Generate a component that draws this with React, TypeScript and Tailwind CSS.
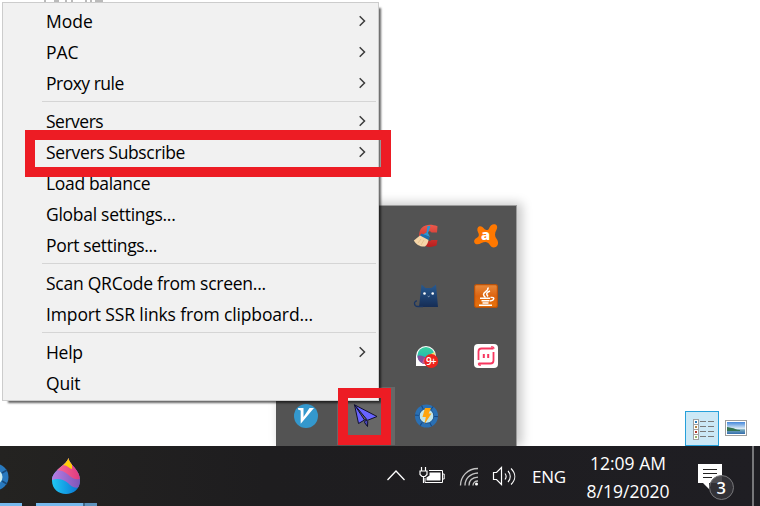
import type { ReactNode } from 'react';

type Entry = { label: string; sub?: boolean; track: string };

const groups: Entry[][] = [
  [
    { label: 'Mode', sub: true, track: 'tracking-[0px]' },
    { label: 'PAC', sub: true, track: 'tracking-[0px]' },
    { label: 'Proxy rule', sub: true, track: 'tracking-[-0.5px]' },
  ],
  [
    { label: 'Servers', sub: true, track: 'tracking-[-0.5px]' },
    { label: 'Servers Subscribe', sub: true, track: 'tracking-[-0.35px]' },
    { label: 'Load balance', track: 'tracking-[-0.33px]' },
    { label: 'Global settings...', track: 'tracking-[-0.28px]' },
    { label: 'Port settings...', track: 'tracking-[-0.33px]' },
  ],
  [
    { label: 'Scan QRCode from screen...', track: 'tracking-[-0.25px]' },
    { label: 'Import SSR links from clipboard...', track: 'tracking-[-0.13px]' },
  ],
  [
    { label: 'Help', sub: true, track: 'tracking-[-0.3px]' },
    { label: 'Quit', track: 'tracking-[-0.2px]' },
  ],
];

function MenuRow({ label, sub, track }: Entry) {
  return (
    <div className="flex h-[31px] items-center justify-between pl-[43px] pr-[12px]">
      <span className={`whitespace-nowrap text-[17.5px] leading-[31px] text-black ${track}`}>{label}</span>
      {sub && (
        <svg className="-mt-px" width="8" height="12" viewBox="0 0 8 12" fill="none" stroke="#3c3c3c" strokeWidth="1.500">
          <path d="M1.700 1.200 6.500 6 1.700 10.800" />
        </svg>
      )}
    </div>
  );
}

function ContextMenu() {
  return (
    <div className="absolute left-[2px] top-[2px] h-[399px] w-[377px] border border-[#cccccc] bg-[#f1f1f1] pt-[3px] shadow-[4px_4px_2px_-2px_rgba(0,0,0,0.6)]">
      {groups.map((group, i) => (
        <div key={i}>
          {i > 0 && <div className="mb-[4px] ml-[39px] mr-[2px] mt-[2px] h-px bg-[#d5d5d5]" />}
          {group.map((entry) => (
            <MenuRow key={entry.label} {...entry} />
          ))}
        </div>
      ))}
    </div>
  );
}

function Cleaner() {
  return (
    <svg width="26" height="26" viewBox="0 0 26 26">
      <defs>
        <linearGradient id="cred" x2="0" y2="1"><stop stopColor="#ec5a4c" /><stop offset="1" stopColor="#b91d1d" /></linearGradient>
      </defs>
      <path d="M24.500 3.200 24 9.500H18.500C17 7.200 12.500 8 12 13 12 18 16 19.500 18.500 17h6l-1 5.500C14 26.500 6 21.500 6 13 6 2.500 15-.5 24.500 3.200Z" fill="url(#cred)" />
      <path d="M14.500 3h3l-2.500 7 2 4-7-2.500 3.500-2Z" fill="#2a96d4" />
      <path d="m8.500 10.500 8 3.500-.7 3-9.300-4Z" fill="#1b6fae" />
      <path d="m7 12.500 8.500 4.500c-.5 3-1.500 5-3.500 6.500C7 24 3 21.500.8 17.500Z" fill="#f6d6a8" />
      <path d="m8 16-3 4m6-3-3 5" stroke="#dfb883" strokeWidth=".7" />
    </svg>
  );
}

function Avast() {
  return (
    <svg width="26" height="26" viewBox="0 0 26 26">
      <path d="M16 5.500C17.500 2 19.500.8 21.800 1.300c2.600.7 3 3.400 1.700 5.500-2 3.500-2 6.500.2 9.300 2 3 1.800 6-.5 7.600-2.600 1.600-5.200.4-6.500-2-2-3.500-5-3.300-8.300-1.600-3 1.800-5.800 1.600-6.900-.3-1.100-2.400.6-4.200 2.800-5.300 2-1.200 2-3 .6-5.500C3.800 6.500 4.300 3.800 6.500 3.200c2-.4 3.500 1 4.500 2.300 1.500 1.800 4 2.200 5 0Z" fill="#ff7800" />
      <text x="8" y="16.500" fontSize="14.500" fontWeight="800" fill="#fff">a</text>
    </svg>
  );
}

function Cat() {
  return (
    <svg width="26" height="26" viewBox="0 0 26 26">
      <defs><linearGradient id="cat" x2="0" y2="1"><stop stopColor="#285a91" /><stop offset="1" stopColor="#162d55" /></linearGradient></defs>
      <path d="M6 24 8.500 1.500l4 3.500h6L23 1.500 25 24Z" fill="url(#cat)" />
      <path d="M10 23.500H5C.5 23.500.5 18 4 17.800" fill="none" stroke="#1a3562" strokeWidth="1.300" />
      <circle cx="11.500" cy="10.500" r="1.300" fill="#fff" /><circle cx="19.700" cy="10.500" r="1.300" fill="#fff" />
      <path d="m14.700 13 1 .7 1-.7" stroke="#9fb1c8" fill="none" strokeWidth=".8" />
    </svg>
  );
}

function Java() {
  return (
    <svg width="26" height="26" viewBox="0 0 26 26">
      <defs><linearGradient id="java" x2="0" y2="1"><stop stopColor="#e88a3c" /><stop offset=".5" stopColor="#dd6410" /><stop offset="1" stopColor="#e8730a" /></linearGradient></defs>
      <rect x="1.600" y="1.600" width="22.800" height="22.800" rx="2" fill="url(#java)" stroke="#b8520b" strokeWidth="1.200" />
      <path d="M15 4.500c.8 4-4.500 4-4.500 7 0 1 .8 2 2 3m4.500-6.500c-4 1.500-4 3-2 5.500" fill="none" stroke="#fff" strokeWidth="1.500" />
      <path d="M7 15.300h10M8.500 17.800h8m-7 2.200h6M6 22.300h13M17.500 14.500c5-1 4 3-.5 3.500" fill="none" stroke="#fff" strokeWidth="1.400" />
    </svg>
  );
}

function Chat() {
  return (
    <svg width="26" height="26" viewBox="0 0 26 26">
      <defs>
        <linearGradient id="lens" x2="0" y2="1"><stop stopColor="#3ccf9f" /><stop offset="1" stopColor="#12b0b8" /></linearGradient>
      </defs>
      <path d="M3 23V13a10 10 0 1 1 10 10Z" fill="#fff" />
      <circle cx="13" cy="12.500" r="8.600" fill="url(#lens)" />
      <path d="m14 13 7.500-4c.8 3 0 5-1 6Z" fill="#f2de6a" />
      <path d="M4.500 13c3-1 6 0 9 2l-2 6c-4-.5-7-4-7-8Z" fill="#84509c" />
      <path d="m11 15 3 1-1 5-4-1Z" fill="#cf5a8c" />
      <circle cx="18.200" cy="18" r="7" fill="#ed241c" />
      <text x="13" y="21.700" fontSize="10" fontWeight="600" fill="#fff" textLength="10.500">9+</text>
    </svg>
  );
}

function Screen() {
  return (
    <svg width="26" height="26" viewBox="0 0 26 26">
      <rect x="1" y="1" width="24" height="24" rx="4" fill="#fff" />
      <path d="M5.500 17V8.500C5.500 6.200 6.500 5.500 8.500 5.500H20.500M20.500 9v8.500c0 2.200-1 3-3 3H5.500" fill="none" stroke="#f7365f" strokeWidth="1.800" />
      <path d="M18 3.800h1.500c1 0 1.500.5 1.500 2M8 22.200H7c-1 0-1.500-.5-1.500-2" fill="none" stroke="#f7365f" strokeWidth="1.300" />
      <path d="M10.800 11v4m4.400-4v4" stroke="#f7365f" strokeWidth="2" />
    </svg>
  );
}

function V2ray() {
  return (
    <svg width="26" height="26" viewBox="0 0 26 26">
      <circle cx="13" cy="13" r="12" fill="#3498cd" />
      <path d="M5 5h5.500v9L16.500 5H21L7.700 20.800V7.500L5 6.500Z" fill="#fff" />
    </svg>
  );
}

function Plane() {
  return (
    <svg width="26" height="26" viewBox="0 0 26 26">
      <path d="M12.500 16.500 14.800 18.500 14.500 23.500 11.500 19.500Z" fill="#4a47b8" stroke="#10102c" strokeWidth="1" />
      <path d="M1.500 1.800 24 13.500 14.500 17.300Z" fill="#6863ff" stroke="#10102c" strokeWidth="1" strokeLinejoin="round" />
      <path d="M1.500 1.800 11.500 17 5.500 20.500Z" fill="#6863ff" stroke="#10102c" strokeWidth="1" strokeLinejoin="round" />
    </svg>
  );
}

function Bolt() {
  return (
    <svg width="26" height="26" viewBox="0 0 26 26">
      <circle cx="13.500" cy="13" r="9.300" fill="#c2e5e8" stroke="#2a70b4" strokeWidth="4.500" />
      <circle cx="13.500" cy="13" r="9.500" fill="none" stroke="#174a85" strokeWidth="4" strokeDasharray="1 8.948" />
      <circle cx="13.500" cy="13" r="7.300" fill="none" stroke="#1c528d" strokeWidth=".8" />
      <path d="M12 5h6l-2.300 5.500H18.500L11.500 21l1.300-7H9.500Z" fill="#ffa40d" />
    </svg>
  );
}

function TrayCell({ children, active }: { children?: ReactNode; active?: boolean }) {
  return (
    <div className="flex items-center justify-center">
      {active ? <div className="flex h-[58px] w-[58px] items-center justify-center bg-[#676767]">{children}</div> : children}
    </div>
  );
}

function TrayFlyout() {
  return (
    <div className="absolute left-[276px] top-[205px] h-[241px] w-[241px] border-r border-t border-[#9b9b9b] bg-[#535353] shadow-[4px_-1px_10px_1px_rgba(0,0,0,0.22)]">
      <div className="grid h-[240px] w-[240px] grid-cols-4 grid-rows-4">
        <TrayCell /><TrayCell /><TrayCell><Cleaner /></TrayCell><TrayCell><Avast /></TrayCell>
        <TrayCell /><TrayCell /><TrayCell><Cat /></TrayCell><TrayCell><Java /></TrayCell>
        <TrayCell /><TrayCell /><TrayCell><Chat /></TrayCell><TrayCell><Screen /></TrayCell>
        <TrayCell><V2ray /></TrayCell><TrayCell active><Plane /></TrayCell><TrayCell><Bolt /></TrayCell><TrayCell />
      </div>
    </div>
  );
}

const swatches = ['#2c7cb8', '#b18442', '#b23a2e', '#92b66b'];

function ViewButtons() {
  return (
    <div className="flex items-end gap-[6px]">
      <div className="flex h-[35px] w-[34px] items-center justify-center border border-[#26a0da] bg-[#cbe8f6] pl-[3px] pt-[3px]">
        <svg width="22" height="22" viewBox="0 0 22 22">
          {swatches.map((c, i) => (
            <g key={c}>
              <rect x=".5" y={0.5 + i * 5} width="5" height="5" fill="#fff" stroke="#a0a0a0" />
              <path d={`M2 ${3 + i * 5}h2`} stroke={c} strokeWidth="2" />
              <path d={`M7 ${2.5 + i * 5}h6m2 0h6`} stroke="#7a7a7a" />
            </g>
          ))}
        </svg>
      </div>
      <svg className="mb-[10px]" width="22" height="16" viewBox="0 0 22 16">
        <defs><linearGradient id="sky" x2="0" y2="1"><stop stopColor="#4487db" /><stop offset=".55" stopColor="#dcebf5" /><stop offset=".65" stopColor="#77a9bb" /><stop offset="1" stopColor="#326cae" /></linearGradient></defs>
        <rect x=".5" y=".5" width="21" height="15" fill="#fff" stroke="#9d9d9d" />
        <rect x="2" y="2" width="18" height="12" fill="url(#sky)" />
        <path d="M2 7c2 0 3 1 5 1s4 2 8 2v1H2Z" fill="#34734f" />
      </svg>
    </div>
  );
}

function PaintDrop() {
  return (
    <svg width="28" height="36" viewBox="0 0 28 36">
      <defs>
        <clipPath id="drop"><path d="M16.500 0c.5 7 11.500 11 11.500 22.500C28 31 21.500 36 14 36S0 31 0 22.500C0 12 14 8 16.500 0Z" /></clipPath>
        <linearGradient id="blue"><stop stopColor="#20c8f5" /><stop offset="1" stopColor="#0872d2" /></linearGradient>
        <linearGradient id="pink"><stop stopColor="#fa7199" /><stop offset="1" stopColor="#e03a80" /></linearGradient>
        <linearGradient id="purple"><stop stopColor="#b77de4" /><stop offset="1" stopColor="#7d55b8" /></linearGradient>
      </defs>
      <g clipPath="url(#drop)">
        <rect width="28" height="36" fill="url(#blue)" />
        <path d="M0 0H28V29C22 31 19 28 16 25C11 21 6 20 0 22Z" fill="url(#purple)" />
        <path d="M0 0H28V21C23 22 20 20 16 16.500C12 13 8 11.500 0 12.500Z" fill="url(#pink)" />
        <path d="M10 0h10v11c-4-1-4-4-10-4Z" fill="#ffcd08" />
      </g>
    </svg>
  );
}

function Taskbar() {
  return (
    <div className="flex h-[60px] w-full bg-[linear-gradient(90deg,#242321,#1e1d1f_35%,#1f1e23)] text-white">
      <div className="flex w-[22px] flex-col justify-between overflow-hidden">
        <svg className="mt-[16px]" width="22" height="32" viewBox="0 0 22 32">
          <circle cx="-5" cy="15" r="10.500" fill="#c9e9ec" stroke="#2879be" strokeWidth="6" />
          <path d="m2 11 5-3m-5 11 5 3" stroke="#174a7b" strokeWidth="1.500" />
        </svg>
        <div className="h-[3px] bg-[#76b9ed]" />
      </div>
      <div className="ml-[14px] flex w-[61px] flex-col justify-between">
        <div className="pl-[16px] pt-[12px]"><PaintDrop /></div>
        <div className="flex h-[3px]">
          <div className="w-[47px] bg-[#76b9ed]" />
          <div className="w-[2px] bg-[#3f6887]" />
          <div className="flex-1 bg-[#5d93bd]" />
        </div>
      </div>
      <svg className="ml-[289px] mt-[16px]" width="132" height="30" viewBox="386 462 132 30" fill="none" stroke="#fff">
        <path d="m387.500 480 8.500-9 8.500 9" strokeWidth="1.300" />
        <path d="M429 470.500h13.500v12H425V478m18-4h1.200v5H443" />
        <path d="M429.500 472.500h11v8h-14v-3l3-2Z" fill="#fff" stroke="none" />
        <path d="M421.500 467v4m4-4v4m-5.500 0h7v3.500l-2 2h-3l-2-2Zm3.500 5v7" strokeWidth="1.200" />
        <path d="M460.500 485.500c0-9 7-17 17.500-17m-13 17c0-7 5-12 13-12.500m-9 12.500c0-5 3.500-8 9-8.300m-5 8.300c0-2.500 2-4.500 5-4.500" stroke="#c4c4c4" strokeWidth="1.300" />
        <circle cx="476.500" cy="484" r="1.500" fill="#fff" stroke="none" />
        <path d="M493.500 472.500h3l5-5v17l-5-5h-3Z" strokeWidth="1.200" />
        <path d="M505 473.500c1.500 2 1.500 4 0 6m3-8.500c3 3 3 8 0 11m3-13.500c5 5 5 11 0 16" strokeWidth="1.100" />
      </svg>
      <span className="ml-[14px] w-[36px] whitespace-nowrap text-[17px] leading-[61px] tracking-[-0.3px]">ENG</span>
      <div className="ml-[17px] flex w-[86px] flex-col items-center pt-[3px] text-[17.5px] leading-[28px]">
        <span className="whitespace-nowrap tracking-[0px]">12:09 AM</span>
        <span className="whitespace-nowrap tracking-[0px]">8/19/2020</span>
      </div>
      <svg className="ml-[26px] mt-[16px]" width="38" height="40" viewBox="697 462 38 40">
        <path d="M698 464h24v19h-13v6l-6-6h-5Z" fill="#fff" />
        <path d="M703 469.500h14m-14 4h14m-14 4h9" stroke="#222" />
        <circle cx="721.500" cy="487.500" r="12" fill="#353439" fillOpacity=".88" stroke="#77777a" />
        <text x="716.500" y="493.500" fontSize="16.500" fontWeight="600" fill="#fff">3</text>
      </svg>
      <div className="ml-auto mr-[6px] w-[2px] bg-[#77777a]" />
    </div>
  );
}

export default function App() {
  return (
    <div className="relative flex h-[506px] w-[760px] flex-col overflow-hidden bg-white font-['Open_Sans','Noto_Sans',sans-serif]">
      <div className="flex h-[446px] items-end justify-end pr-[13px]">
        <ViewButtons />
        <TrayFlyout />
        <ContextMenu />
      </div>
      <svg className="absolute left-[44px] top-0" width="64" height="2" viewBox="0 0 64 2">
        <path d="M0 1h2m8 0h5m6 0h2m4 0h2m12 0h2m3 0h2m3 0h8" stroke="#777" />
      </svg>
      <div className="absolute left-[25px] top-[130px] h-[47px] w-[366px] border-[10px] border-[#ed1c24]" />
      <div className="absolute left-[338px] top-[388px] h-[57px] w-[53px] border-[10px] border-[#ed1c24]" />
      <div className="relative"><Taskbar /></div>
    </div>
  );
}
